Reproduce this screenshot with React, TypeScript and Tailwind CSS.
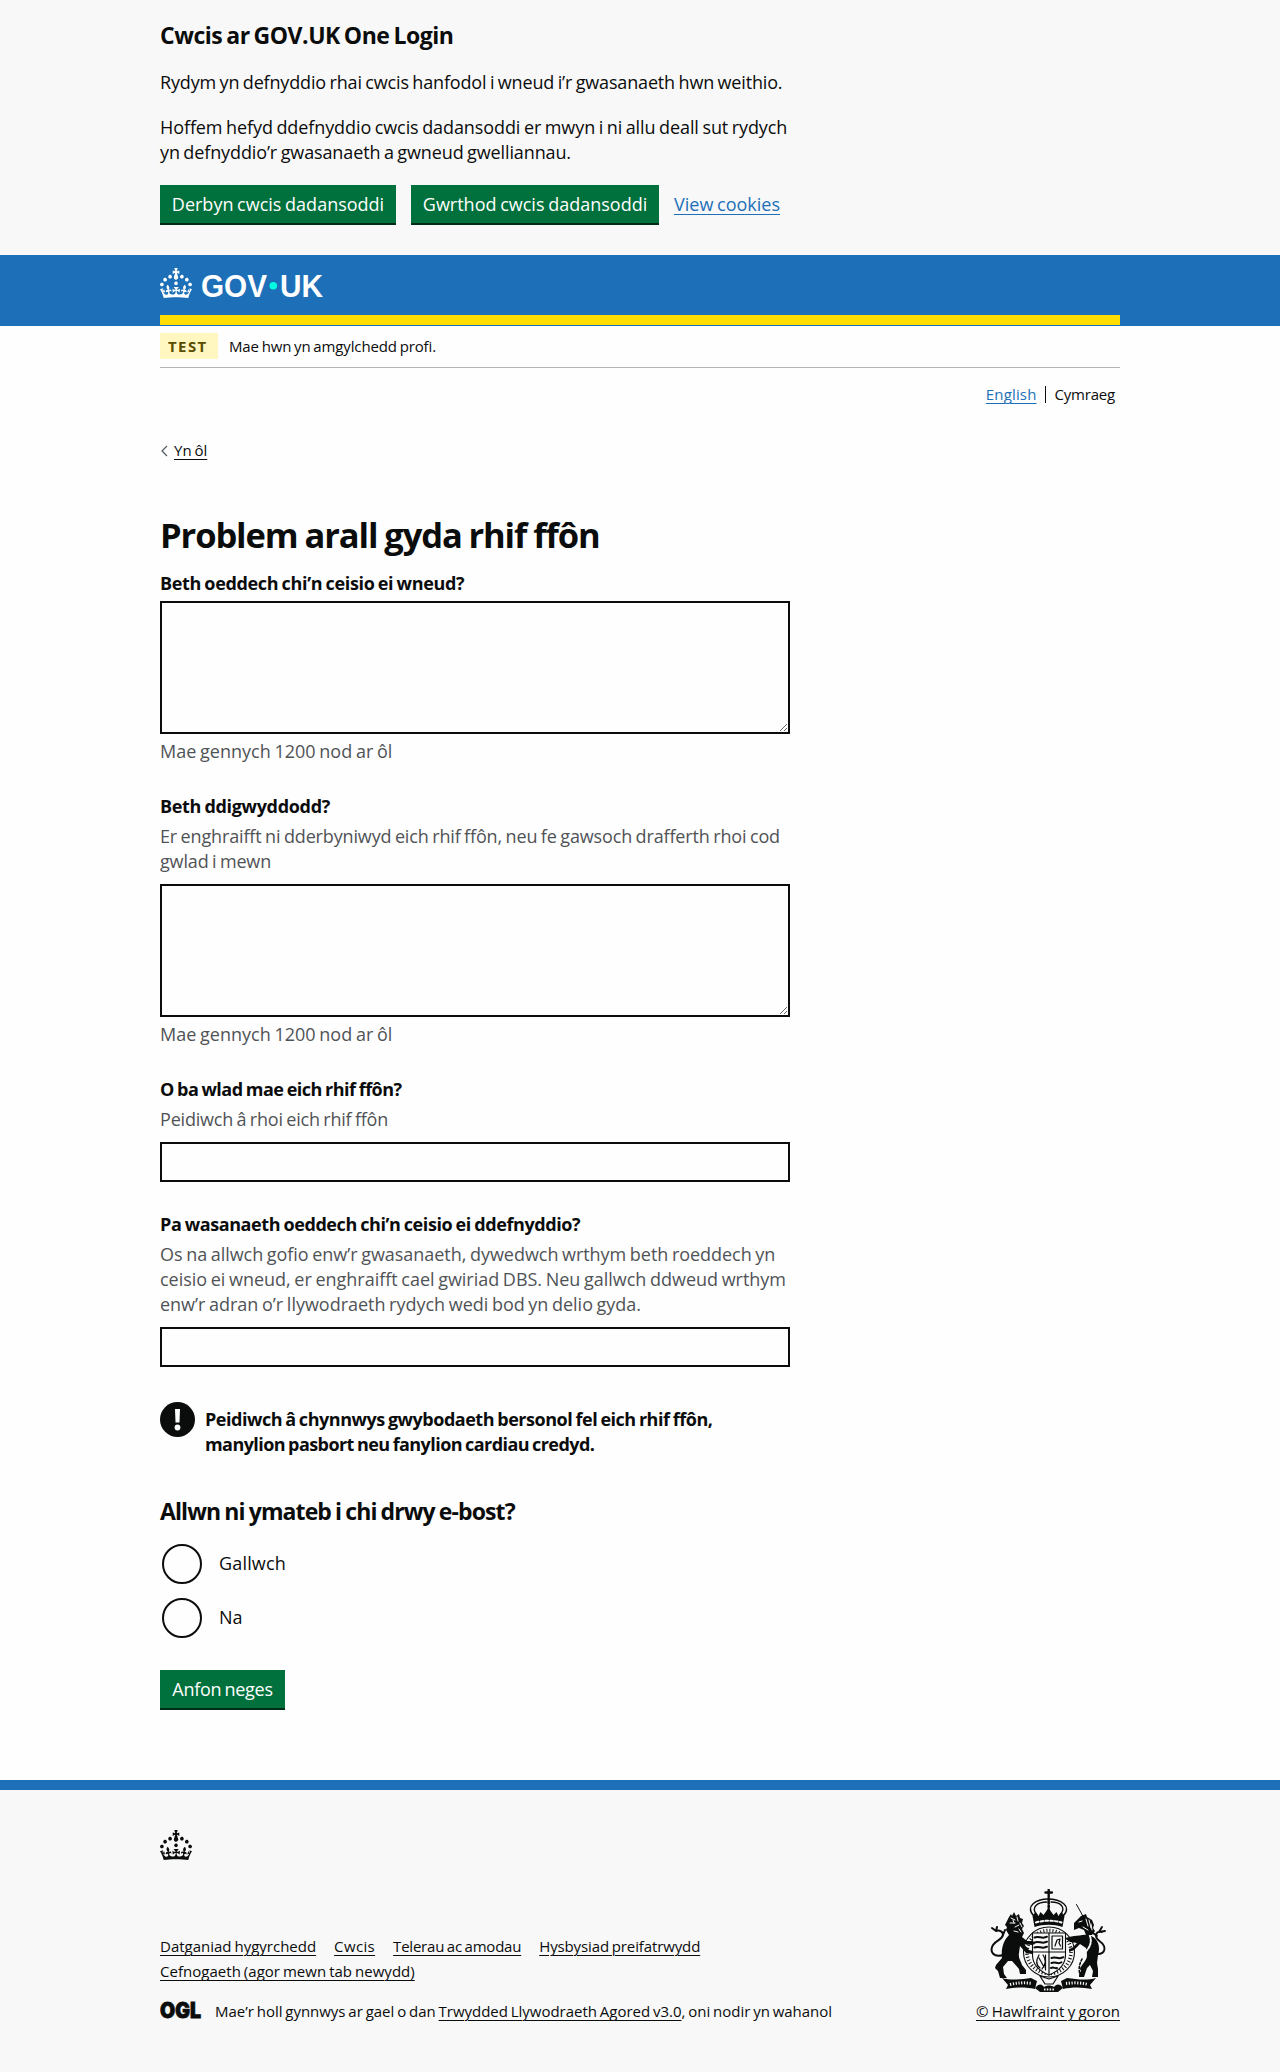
import type { ReactNode } from "react";

const CROWN =
  "M22.6 10.4c-1 .4-2-.1-2.4-1-.4-.9.1-2 1-2.4.9-.4 2 .1 2.4 1s-.1 2-1 2.4m-5.9 6.7c-.9.4-2-.1-2.4-1-.4-.9.1-2 1-2.4.9-.4 2 .1 2.4 1s-.1 2-1 2.4m10.8-3.7c-1 .4-2-.1-2.4-1-.4-.9.1-2 1-2.4.9-.4 2 .1 2.4 1s0 2-1 2.4m3.3 4.8c-1 .4-2-.1-2.4-1-.4-.9.1-2 1-2.4.9-.4 2 .1 2.4 1s-.1 2-1 2.4M17 4.7l2.3 1.2V2.5l-2.3.7-.2-.2.9-3h-3.4l.9 3-.2.2c-.1.1-2.3-.7-2.3-.7v3.4L15 4.7c.1.1.1.2.2.2l-1.3 4c-.1.2-.1.4-.1.6 0 1.1.8 2 1.9 2.2h.7c1-.2 1.9-1.1 1.9-2.1 0-.2 0-.4-.1-.6l-1.3-4c-.1-.2 0-.2.1-.3m-7.6 5.7c.9.4 2-.1 2.4-1 .4-.9-.1-2-1-2.4-.9-.4-2 .1-2.4 1s0 2 1 2.4m-5 3c.9.4 2-.1 2.4-1 .4-.9-.1-2-1-2.4-.9-.4-2 .1-2.4 1s.1 2 1 2.4m-3.2 4.8c.9.4 2-.1 2.4-1 .4-.9-.1-2-1-2.4-.9-.4-2 .1-2.4 1s0 2 1 2.4m14.8 11c4.4 0 8.6.3 12.3.8 1.1-4.5 2.4-7 3.7-8.8l-2.5-.9c.2 1.3.3 1.9 0 2.7-.4-.4-.8-1.1-1.1-2.3l-1.2 4c.7-.5 1.3-.8 2-.9-1.1 2.5-2.6 3.1-3.5 3-1.1-.2-1.7-1.2-1.5-2.1.3-1.2 1.5-1.5 2.1-.1 1.1-2.3-.8-3-2-2.3 1.9-1.9 2.1-3.5.6-5.6-2.1 1.6-2.1 3.2-1.2 5.5-1.2-1.4-3.2-.6-2.5 1.6.9-1.4 2.1-.5 1.9.8-.2 1.1-1.7 2.1-3.5 1.9-2.7-.2-2.9-2.1-2.9-3.6.7-.1 1.9.5 2.9 1.9l.4-4.3c-1.1 1.1-2.1 1.4-3.2 1.4.4-1.2 2.1-3 2.1-3h-5.4s1.7 1.9 2.1 3c-1.1 0-2.1-.2-3.2-1.4l.4 4.3c1-1.4 2.2-2 2.9-1.9-.1 1.5-.2 3.4-2.9 3.6-1.9.2-3.4-.8-3.5-1.9-.2-1.3 1-2.2 1.9-.8.7-2.3-1.2-3-2.5-1.6.9-2.2.9-3.9-1.2-5.5-1.5 2-1.3 3.7.6 5.6-1.2-.7-3.1 0-2 2.3.6-1.4 1.8-1.1 2.1.1.2.9-.3 1.9-1.5 2.1-.9.2-2.4-.5-3.5-3 .6 0 1.2.3 2 .9l-1.2-4c-.3 1.1-.7 1.9-1.1 2.3-.3-.8-.2-1.4 0-2.7l-2.9.9C1.3 23 2.6 25.5 3.7 30c3.7-.5 7.9-.8 12.3-.8";

const LINK = "underline decoration-1 underline-offset-[3px]";

function Container({ className = "", children }: { className?: string; children: ReactNode }) {
  return <div className={`mx-auto w-[960px] ${className}`}>{children}</div>;
}

function Button({ className, children }: { className: string; children: ReactNode }) {
  return (
    <button
      type="button"
      className={`flex h-[38px] justify-center bg-[#00703c] pt-[7px] text-[18px] leading-[25px] whitespace-nowrap text-white shadow-[0_2px_0_#002d18] [word-spacing:-1px] ${className}`}
    >
      {children}
    </button>
  );
}

function Label({ className, children }: { className: string; children: ReactNode }) {
  return <label className={`block h-[25px] font-bold whitespace-nowrap [word-spacing:-1px] ${className}`}>{children}</label>;
}

function Line({ className, children }: { className: string; children: ReactNode }) {
  return <span className={`block whitespace-nowrap ${className}`}>{children}</span>;
}

function Radio({ className, children }: { className: string; children: ReactNode }) {
  return (
    <label className="flex h-10 items-start pl-[2px]">
      <span className="size-10 rounded-full border-2 border-[#0b0c0c]" />
      <span className={`pt-[7px] pl-[17px] ${className}`}>{children}</span>
    </label>
  );
}

function RoyalArms() {
  const k = "#0b0c0c";
  return (
    <svg width="118" height="104" viewBox="0 0 118 104" fill="none" stroke={k} strokeWidth="1.2" strokeLinecap="round" strokeLinejoin="round">
      {/* crown */}
      <path d="M58.7 .5v8M55.5 3.5h6.4" strokeWidth="2.4" />
      <path d="M44 27C34 17 47 10 58 10c12 0 25 7 15 17M47 26c-7-8 1-13 10-13M70 26c7-8 0-13-9-13" strokeWidth="1.4" />
      <path d="M58.7 10v14" strokeWidth="2.6" strokeDasharray="1.4 2" />
      <path d="M42.5 27l3-4 3 4 2-4 3 3 5-7 5 7 3-3 2 4 3-4 3 4-2 11c-9-3-19-3-28 0z" fill={k} stroke="none" />
      <path d="M46 33.5c8-2.4 17.5-2.4 25.5 0" stroke="#f8f8f8" strokeWidth="2" strokeDasharray="2.6 2.2" />
      {/* garter and shield */}
      <ellipse cx="59" cy="63" rx="25.5" ry="25" strokeWidth="1.1" />
      <ellipse cx="59" cy="63" rx="22" ry="21.5" strokeWidth="3.6" strokeDasharray="1 2.1" strokeLinecap="butt" />
      <path d="M42.5 44h33v22c0 10-7 16-16.5 20-9.5-4-16.500-10-16.500-20z" fill="#f8f8f8" strokeWidth="1.1" />
      <path d="M59 44v42M42.5 63h33" />
      <path d="M44.500 48.500c4-2 8 2 12.500-.8M44.500 53.500c4-2 8 2 12.500-.8M44.500 58.500c4-2 8 2 12.500-.8M61.500 69c4-2 7 2 12-.8M61.500 74c4-2 6 2 10-.8M61 79c3-1.500 4 1 6 0" strokeWidth="2" />
      <path d="M62 47h10.500v13H62zM65 57l2-6 3-1-1 4 1.500 3M49 66c-3 5-3 10 1 13M53 66c3 4 3 9-1 14M49 69l5 9M55.500 66v15" strokeWidth="1.2" />
      <path d="M50 87l9 3 9-3-5 8h-8z" fill="#f8f8f8" />
      {/* lion */}
      <path d="M19 28l2-3 1 2 2-4 2 4 3-2 1 4 3 1-1 4 2 3-2 3 2 4-2 4-4 3-4-1-5-4-3-5 1-3-2-2 2-4z" fill={k} stroke="none" />
      <path d="M21 29l4 2M20 34h5M27 28l1 4M25 38l4-2M30 34l2 4M24 42l4 1M29 40l2 3M23 31l1 3" stroke="#f8f8f8" strokeWidth="1" />
      <path d="M19 46c4 1 8-1 13 2l5 4 6 0 2 3-3 1-8-1 5 6 4 1-1 3-6-1-6-7-1 7c-1 5 2 8 3 12l4 5 0 4h-6l-1-5-7-8-4 0-5 6 1 7 3 4h-7l-2-7-3-3 1-3 6-7c-1-9 1-17 7-23z" fill={k} stroke="none" />
      <path d="M13 66C4 69-1 63 3 56c3-5 9-5 10-10 0-4-4-5-7-4M6 42l-4-3M6 42l1-4M13 46l2-5" strokeWidth="2" />
      {/* unicorn */}
      <path d="M86.500 15.500L94 29" strokeWidth="1" />
      <path d="M84 34l7-7 5-2 1 3 5 3 2 5-1 3 2 3-3 4-6 0-2-5-5-2-5 2z" fill={k} stroke="none" />
      <path d="M89 33l3-1M96 30l2 7M99 31l2 8M93 38l5 3M101 35l1 6" stroke="#f8f8f8" strokeWidth="1" />
      <path d="M98 46c-5-1-9 1-14 1l-5 1-3 2 4 3 7 1-5 5-3 1v3l5-2 6-6 6 4c1 6 2 9-1 13l-5 7-1 9h5l3-9 3-3 3 6-1 6h6l0-8-1-6 1-8c3-8 0-18-10-20z" fill={k} stroke="none" />
      <path d="M103 64c8 3 13-1 11-7-2-5-8-5-8-10 0-4 3-5 6-4M109 43l3-5M109 43l6-1M107 47l-4-3" strokeWidth="1.9" />
      <path d="M100 47c3 9-3 14-7 19s-6 9-3 16" stroke="#f8f8f8" strokeWidth="2" strokeDasharray="2 1.5" />
      <path d="M92 70c-3 6-4 11-1 18" strokeWidth="1.6" strokeDasharray="2 2" />
      {/* motto ribbon */}
      <path d="M12 89c10 3 20 1 29 0l6 3-2 8c-9-2-19-2-29 0l2-4zM106 89c-10 3-20 1-29 0l-6 3 2 8c9-2 19-2 29 0l-2-4z" fill={k} stroke="none" />
      <path d="M20 95.500c8-2 15-2 22-1M76 94.500c7-1 15-1 22 1" stroke="#f8f8f8" strokeWidth="3" strokeDasharray="1.2 1.6" strokeLinecap="butt" />
      <path d="M45 99c4-5 7-4 9-1 3-2 7-2 10 0 2-3 6-4 9 1l-5 4H50z" fill={k} stroke="none" />
      <path d="M54 100.500h10" stroke="#f8f8f8" strokeWidth="2" strokeDasharray="1.5 1.3" strokeLinecap="butt" />
    </svg>
  );
}

export default function App() {
  return (
    <div className="min-h-[2072px] bg-[#fefefe] font-['Open_Sans',sans-serif] text-[18px] leading-[25px] text-[#0b0c0c]">
      <section className="h-[255px] bg-[#f8f8f8]">
        <Container className="pt-[21px]">
          <h2 className="text-[23px] leading-[29px] font-bold tracking-[-0.48px] [word-spacing:-1.5px]">Cwcis ar GOV.UK One Login</h2>
          <p className="mt-5 mb-5 [word-spacing:-1px]">
            <Line className="tracking-[-0.16px]">Rydym yn defnyddio rhai cwcis hanfodol i wneud i’r gwasanaeth hwn weithio.</Line>
          </p>
          <p className="mb-5 [word-spacing:-1px]">
            <Line className="tracking-[-0.09px]">Hoffem hefyd ddefnyddio cwcis dadansoddi er mwyn i ni allu deall sut rydych</Line>
            <Line className="tracking-[-0.12px]">yn defnyddio’r gwasanaeth a gwneud gwelliannau.</Line>
          </p>
          <div className="flex gap-[15px]">
            <Button className="w-[236px]">Derbyn cwcis dadansoddi</Button>
            <Button className="w-[248px]">Gwrthod cwcis dadansoddi</Button>
            <a href="#" className={`pt-[7px] text-[#1d70b8] [word-spacing:-1px] ${LINK}`}>View cookies</a>
          </div>
        </Container>
      </section>

      <header className="h-[71px] bg-[#1d70b8]">
        <Container className="flex h-[70px] flex-col justify-between border-b-[10px] border-[#ffdd00] pt-[13px]">
          <svg width="170" height="36" viewBox="0 0 170 36" fill="#fff">
            <path d={CROWN} />
            <text x="41" y="28.500" fontFamily="Liberation Sans, sans-serif" fontWeight="700" fontSize="30.500" textLength="66" lengthAdjust="spacingAndGlyphs">GOV</text>
            <circle cx="113.300" cy="17.800" r="3.800" fill="#00ffe0" />
            <text x="120" y="28.500" fontFamily="Liberation Sans, sans-serif" fontWeight="700" fontSize="30.500" textLength="43" lengthAdjust="spacingAndGlyphs">UK</text>
          </svg>
        </Container>
      </header>

      <Container>
        <div className="flex h-[42px] border-b border-[#b1b4b6] pt-[7px] text-[15px] leading-5">
          <strong className="mr-[11px] h-[26px] w-[58px] bg-[#fff7bf] pt-[3px] pl-[8px] tracking-[1.4px] text-[#594d00]">TEST</strong>
          <span className="pt-[3px] tracking-[-0.125px] [word-spacing:-1px]">Mae hwn yn amgylchedd profi.</span>
        </div>
        <nav className="flex justify-end pt-4 pr-[5px] text-[15px] leading-5">
          <a href="#" className={`tracking-[0.15px] text-[#1d70b8] ${LINK}`}>English</a>
          <span className="mt-[2px] mr-[9px] ml-[8px] h-[17px] w-px bg-[#0b0c0c]" />
          <span className="tracking-[-0.2px]">Cymraeg</span>
        </nav>
        <div className="flex items-center pt-9 text-[15px] leading-5">
          <svg width="14" height="14" viewBox="0 0 14 14" fill="none" stroke="#505a5f" strokeWidth="1.2" className="mt-[2px]">
            <path d="M7 2L2 7l5 5" />
          </svg>
          <a href="#" className={`[word-spacing:-1px] ${LINK}`}>Yn ôl</a>
        </div>

        <main className="w-[630px]">
          <h1 className="mt-[55px] text-[34.5px] leading-10 font-bold tracking-[-1.1px] whitespace-nowrap [word-spacing:-1px]">Problem arall gyda rhif ffôn</h1>

          <Label className="mt-4 mb-[5px] tracking-[-0.34px]">Beth oeddech chi’n ceisio ei wneud?</Label>
          <textarea className="block h-[133px] w-full border-2 border-[#0b0c0c]" />
          <p className="mt-[5px] tracking-[0.01px] text-[#505356] [word-spacing:-1px]">Mae gennych 1200 nod ar ôl</p>

          <Label className="mt-[30px] mb-[5px] tracking-[-0.32px]">Beth ddigwyddodd?</Label>
          <p className="text-[#505356] [word-spacing:-1px]">
            <Line className="tracking-[-0.145px]">Er enghraifft ni dderbyniwyd eich rhif ffôn, neu fe gawsoch drafferth rhoi cod</Line>
            <Line className="tracking-[-0.16px]">gwlad i mewn</Line>
          </p>
          <textarea className="mt-[10px] block h-[133px] w-full border-2 border-[#0b0c0c]" />
          <p className="mt-[5px] tracking-[0.01px] text-[#505356] [word-spacing:-1px]">Mae gennych 1200 nod ar ôl</p>

          <Label className="mt-[30px] mb-[5px] tracking-[-0.5px]">O ba wlad mae eich rhif ffôn?</Label>
          <p className="tracking-[-0.2px] text-[#505356] [word-spacing:-1px]">Peidiwch â rhoi eich rhif ffôn</p>
          <input className="mt-[10px] block h-10 w-full border-2 border-[#0b0c0c]" />

          <Label className="mt-[30px] mb-[5px] tracking-[-0.4px]">Pa wasanaeth oeddech chi’n ceisio ei ddefnyddio?</Label>
          <p className="text-[#505356] [word-spacing:-1px]">
            <Line className="tracking-[-0.04px]">Os na allwch gofio enw’r gwasanaeth, dywedwch wrthym beth roeddech yn</Line>
            <Line className="tracking-[-0.02px]">ceisio ei wneud, er enghraifft cael gwiriad DBS. Neu gallwch ddweud wrthym</Line>
            <Line className="tracking-[-0.02px]">enw’r adran o’r llywodraeth rydych wedi bod yn delio gyda.</Line>
          </p>
          <input className="mt-[10px] block h-10 w-full border-2 border-[#0b0c0c]" />

          <div className="mt-[35px] flex h-[55px] gap-[10px]">
            <svg width="35" height="35" viewBox="0 0 35 35" className="shrink-0">
              <circle cx="17.5" cy="17.5" r="17.5" fill="#0b0c0c" />
              <path d="M15 7h5l-.5 13.500h-4z" fill="#fff" />
              <circle cx="17.5" cy="25.5" r="2.9" fill="#fff" />
            </svg>
            <strong className="pt-[5px] font-bold [word-spacing:-1px]">
              <Line className="tracking-[-0.47px]">Peidiwch â chynnwys gwybodaeth bersonol fel eich rhif ffôn,</Line>
              <Line className="tracking-[-0.57px]">manylion pasbort neu fanylion cardiau credyd.</Line>
            </strong>
          </div>

          <h2 className="mt-[39px] mb-[18px] text-[23px] leading-[30px] font-bold tracking-[-0.9px] whitespace-nowrap [word-spacing:-1px]">Allwn ni ymateb i chi drwy e-bost?</h2>
          <div className="flex flex-col gap-[14px]">
            <Radio className="tracking-[0.17px]">Gallwch</Radio>
            <Radio className="">Na</Radio>
          </div>
          <div className="mt-8 h-[110px]">
            <Button className="w-[125px] tracking-[-0.3px]">Anfon neges</Button>
          </div>
        </main>
      </Container>

      <footer className="h-[292px] border-t-[10px] border-[#1d70b8] bg-[#f8f8f8] text-[15px] leading-[25px]">
        <Container className="pt-10">
          <svg width="32" height="30" viewBox="0 0 32 30" fill="#0b0c0c">
            <path d={CROWN} />
          </svg>
          <div className="flex h-[164px] items-end justify-between">
            <div>
              <ul className="flex w-[600px] flex-wrap gap-x-[18px] whitespace-nowrap [word-spacing:-1px]">
                <li><a href="#" className={LINK}>Datganiad hygyrchedd</a></li>
                <li><a href="#" className={`tracking-[0.36px] ${LINK}`}>Cwcis</a></li>
                <li><a href="#" className={`tracking-[-0.22px] ${LINK}`}>Telerau ac amodau</a></li>
                <li><a href="#" className={`tracking-[-0.12px] ${LINK}`}>Hysbysiad preifatrwydd</a></li>
                <li><a href="#" className={`tracking-[0.03px] ${LINK}`}>Cefnogaeth (agor mewn tab newydd)</a></li>
              </ul>
              <div className="mt-[15px] flex gap-[13px] whitespace-nowrap">
                <svg width="42" height="25" viewBox="0 0 42 25" fill="#0b0c0c" stroke="#0b0c0c" strokeWidth="0.8">
                  <text x="0" y="19" fontFamily="Inter, sans-serif" fontWeight="900" fontSize="21" textLength="41" lengthAdjust="spacingAndGlyphs">OGL</text>
                </svg>
                <p className="[word-spacing:-1px] tracking-[-0.02px]">
                  Mae’r holl gynnwys ar gael o dan <a href="#" className={LINK}>Trwydded Llywodraeth Agored v3.0</a>, oni nodir yn wahanol
                </p>
              </div>
            </div>
            <div className="flex flex-col items-end">
              <span className="pr-[12px]"><RoyalArms /></span>
              <a href="#" className={`mt-[6px] whitespace-nowrap [word-spacing:-0.6px] ${LINK}`}>© Hawlfraint y goron</a>
            </div>
          </div>
        </Container>
      </footer>
    </div>
  );
}
